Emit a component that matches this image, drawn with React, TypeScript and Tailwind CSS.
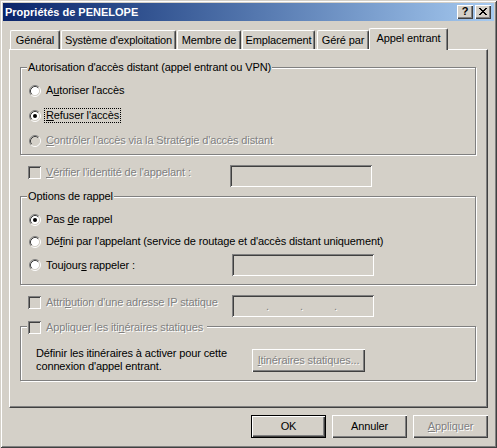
import React from "react";

function Radio({ checked, disabled }: { checked?: boolean; disabled?: boolean }) {
  return (
    <svg width="12" height="12" viewBox="0 0 12 12" className="block shrink-0">
      <circle cx="6" cy="6" r="4.5" fill={disabled ? "#d4d0c8" : "#ffffff"} />
      <path d="M2.11 9.89 A5.5 5.5 0 0 1 9.89 2.11" fill="none" stroke="#808080" />
      <path d="M9.89 2.11 A5.5 5.5 0 0 1 2.11 9.89" fill="none" stroke="#ffffff" />
      <path d="M2.82 9.18 A4.5 4.5 0 0 1 9.18 2.82" fill="none" stroke="#404040" />
      <path d="M9.18 2.82 A4.5 4.5 0 0 1 2.82 9.18" fill="none" stroke="#d4d0c8" />
      {checked && <circle cx="6" cy="6" r="2" fill={disabled ? "#808080" : "#000000"} />}
    </svg>
  );
}

function Check({ disabled }: { disabled?: boolean }) {
  return (
    <span
      className={
        disabled
          ? "block w-[13px] h-[13px] shrink-0 bg-[#d4d0c8] shadow-[inset_1px_1px_0_#808080,inset_-1px_-1px_0_#ffffff,inset_2px_2px_0_#404040,inset_-2px_-2px_0_#d4d0c8]"
          : "block w-[13px] h-[13px] shrink-0 bg-white shadow-[inset_1px_1px_0_#808080,inset_-1px_-1px_0_#ffffff,inset_2px_2px_0_#404040,inset_-2px_-2px_0_#d4d0c8]"
      }
    />
  );
}

function Label({
  children,
  disabled,
  focus,
}: {
  children: React.ReactNode;
  disabled?: boolean;
  focus?: boolean;
}) {
  const border = focus ? "border border-dotted border-black" : "border border-transparent";
  const color = disabled ? "text-[#808080] [text-shadow:1px_1px_0_#ffffff]" : "text-black";
  return <span className={`${border} ${color} px-[1px] leading-[13px] whitespace-nowrap`}>{children}</span>;
}

function Edit({ className, children }: { className: string; children?: React.ReactNode }) {
  return (
    <div
      className={`${className} h-[22px] shrink-0 bg-[#d4d0c8] shadow-[inset_1px_1px_0_#808080,inset_-1px_-1px_0_#ffffff,inset_2px_2px_0_#404040,inset_-2px_-2px_0_#d4d0c8]`}
    >
      {children}
    </div>
  );
}

function Button({
  children,
  isDefault,
  disabled,
  className,
}: {
  children: React.ReactNode;
  isDefault?: boolean;
  disabled?: boolean;
  className: string;
}) {
  const frame = isDefault ? "border border-black" : "";
  const color = disabled ? "text-[#808080] [text-shadow:1px_1px_0_#ffffff]" : "text-black";
  return (
    <div className={`${className} ${frame} h-[23px] shrink-0 bg-[#d4d0c8]`}>
      <div
        className={`${color} w-full h-full flex items-center justify-center leading-[13px] shadow-[inset_1px_1px_0_#ffffff,inset_-1px_-1px_0_#404040,inset_-2px_-2px_0_#808080]`}
      >
        {children}
      </div>
    </div>
  );
}

function Group({
  label,
  className,
  children,
}: {
  label: React.ReactNode;
  className: string;
  children: React.ReactNode;
}) {
  return (
    <div
      className={`${className} relative ml-[10px] w-[456px] shrink-0 border border-[#808080] shadow-[1px_1px_0_#ffffff,inset_1px_1px_0_#ffffff]`}
    >
      {label}
      {children}
    </div>
  );
}

const tabs: { label: string; cls: string }[] = [
  { label: "Général", cls: "ml-[1px] w-[50px]" },
  { label: "Système d'exploitation", cls: "ml-[1px] w-[115px]" },
  { label: "Membre de", cls: "ml-[1px] w-[64px]" },
  { label: "Emplacement", cls: "ml-[1px] w-[73px]" },
  { label: "Géré par", cls: "ml-[2px] w-[52px]" },
];

export default function App() {
  return (
    <div
      className="w-[497px] h-[448px] bg-[#d4d0c8] p-[3px] flex flex-col text-[11px] tracking-[-0.12px] text-black shadow-[inset_1px_1px_0_#d4d0c8,inset_-1px_-1px_0_#404040,inset_2px_2px_0_#ffffff,inset_-2px_-2px_0_#808080] overflow-hidden"
      style={{ fontFamily: '"Liberation Sans", Arial, sans-serif' }}
    >
      {/* Title bar */}
      <div className="h-[18px] shrink-0 flex items-center pl-[2px] pr-[3px] bg-gradient-to-r from-[#0a246a] to-[#a6caf0]">
        <span className="flex-1 text-white font-bold leading-[13px] tracking-normal whitespace-nowrap">
          Propriétés de PENELOPE
        </span>
        <div className="w-[16px] h-[14px] bg-[#d4d0c8] flex items-center justify-center shadow-[inset_1px_1px_0_#ffffff,inset_-1px_-1px_0_#404040,inset_-2px_-2px_0_#808080]">
          <span className="font-bold text-[11px] leading-[11px] tracking-normal mt-[-1px]">?</span>
        </div>
        <div className="ml-[2px] w-[16px] h-[14px] bg-[#d4d0c8] flex items-center justify-center shadow-[inset_1px_1px_0_#ffffff,inset_-1px_-1px_0_#404040,inset_-2px_-2px_0_#808080]">
          <svg width="8" height="7" viewBox="0 0 8 7" className="block mt-[-1px]" shapeRendering="crispEdges">
            <path d="M0 0h2v1h-2zM6 0h2v1h-2zM1 1h2v1h-2zM5 1h2v1h-2zM2 2h4v1h-4zM3 3h2v1h-2zM2 4h4v1h-4zM1 5h2v1h-2zM5 5h2v1h-2zM0 6h2v1h-2zM6 6h2v1h-2z" fill="#000" />
          </svg>
        </div>
      </div>

      <div className="flex-1 flex flex-col pl-[6px] pr-[6px]">
        {/* Tabs */}
        <div className="h-[28px] shrink-0 flex items-end">
          {tabs.map((t) => (
            <div
              key={t.label}
              className={`${t.cls} h-[19px] shrink-0 flex items-center justify-center pt-[1px] whitespace-nowrap leading-[13px] border-l border-t border-r border-l-white border-t-white border-r-[#404040] rounded-t-[2px] shadow-[inset_-1px_0_0_#808080]`}
            >
              {t.label}
            </div>
          ))}
          <div className="relative z-10 w-[79px] h-[22px] mb-[-1px] shrink-0 flex items-center justify-center pb-[2px] whitespace-nowrap leading-[13px] bg-[#d4d0c8] border-l border-t border-r border-l-white border-t-white border-r-[#404040] rounded-t-[2px] shadow-[inset_-1px_0_0_#808080]">
            Appel entrant
          </div>
        </div>

        {/* Panel */}
        <div className="w-[479px] h-[359px] shrink-0 flex flex-col border border-l-white border-t-white border-r-[#404040] border-b-[#404040] shadow-[inset_-1px_-1px_0_#808080]">
          <Group
            className="mt-[17px] h-[88px]"
            label={
              <div className="absolute left-[6px] top-[-7px] px-[1px] bg-[#d4d0c8] leading-[13px] whitespace-nowrap">
                Autorisation d'accès distant (appel entrant ou VPN)
              </div>
            }
          >
            <div className="flex flex-col gap-[10px] pt-[15px] pl-[8px]">
              <div className="h-[15px] flex items-center gap-[3px]">
                <Radio />
                <Label>
                  A<u>u</u>toriser l'accès
                </Label>
              </div>
              <div className="h-[15px] flex items-center gap-[3px]">
                <Radio checked />
                <Label focus>
                  <u>R</u>efuser l'accès
                </Label>
              </div>
              <div className="h-[15px] flex items-center gap-[3px]">
                <Radio disabled />
                <Label disabled>
                  <u>C</u>ontrôler l'accès via la Stratégie d'accès distant
                </Label>
              </div>
            </div>
          </Group>

          {/* Vérifier */}
          <div className="mt-[10px] h-[22px] shrink-0 flex items-start pl-[18px]">
            <div className="w-[202px] h-[15px] flex items-center gap-[3px]">
              <Check disabled />
              <Label disabled>
                <u>V</u>érifier l'identité de l'appelant :
              </Label>
            </div>
            <Edit className="w-[142px]" />
          </div>

          <Group
            className="mt-[9px] h-[89px]"
            label={
              <div className="absolute left-[6px] top-[-7px] px-[1px] bg-[#d4d0c8] leading-[13px] whitespace-nowrap">
                Options de rappel
              </div>
            }
          >
            <div className="flex flex-col pt-[15px] pl-[8px]">
              <div className="h-[15px] flex items-center gap-[3px]">
                <Radio checked />
                <Label>
                  Pas <u>d</u>e rappel
                </Label>
              </div>
              <div className="mt-[7px] h-[15px] flex items-center gap-[3px]">
                <Radio />
                <Label>
                  Dé<u>f</u>ini par l'appelant (service de routage et d'accès distant uniquement)
                </Label>
              </div>
              <div className="mt-[5px] h-[22px] flex items-center">
                <div className="w-[203px] flex items-center gap-[3px]">
                  <Radio />
                  <Label>
                    Toujour<u>s</u> rappeler :
                  </Label>
                </div>
                <Edit className="w-[142px]" />
              </div>
            </div>
          </Group>

          {/* Attribution IP */}
          <div className="mt-[10px] h-[22px] shrink-0 flex items-start pl-[18px]">
            <div className="w-[204px] h-[15px] flex items-center gap-[3px]">
              <Check disabled />
              <Label disabled>
                Attri<u>b</u>ution d'une adresse IP statique
              </Label>
            </div>
            <Edit className="w-[142px] flex items-center pl-[34px] text-[#808080] [text-shadow:1px_1px_0_#ffffff]">
              <span className="w-[34px] leading-[13px] mt-[1px]">.</span>
              <span className="w-[34px] leading-[13px] mt-[1px]">.</span>
              <span className="w-[10px] leading-[13px] mt-[1px]">.</span>
            </Edit>
          </div>

          <Group
            className="mt-[9px] h-[55px]"
            label={
              <div className="absolute left-[6px] top-[-6px] h-[13px] pl-[1px] pr-[2px] bg-[#d4d0c8] flex items-center gap-[3px] whitespace-nowrap">
                <Check disabled />
                <Label disabled>
                  Appliquer les iti<u>n</u>éraires statiques
                </Label>
              </div>
            }
          >
            <div className="flex items-center pt-[21px] pl-[15px]">
              <div className="w-[216px] flex flex-col leading-[13px] mt-[-1px]">
                <span className="whitespace-nowrap">Définir les itinéraires à activer pour cette</span>
                <span className="whitespace-nowrap">connexion d'appel entrant.</span>
              </div>
              <Button className="w-[113px]" disabled>
                <span>
                  <u>I</u>tinéraires statiques...
                </span>
              </Button>
            </div>
          </Group>
        </div>

        {/* Dialog buttons */}
        <div className="mt-[7px] flex justify-end gap-[6px]">
          <Button className="w-[75px]" isDefault>
            OK
          </Button>
          <Button className="w-[75px]">Annuler</Button>
          <Button className="w-[75px]" disabled>
            <span>
              <u>A</u>ppliquer
            </span>
          </Button>
        </div>
      </div>
    </div>
  );
}
